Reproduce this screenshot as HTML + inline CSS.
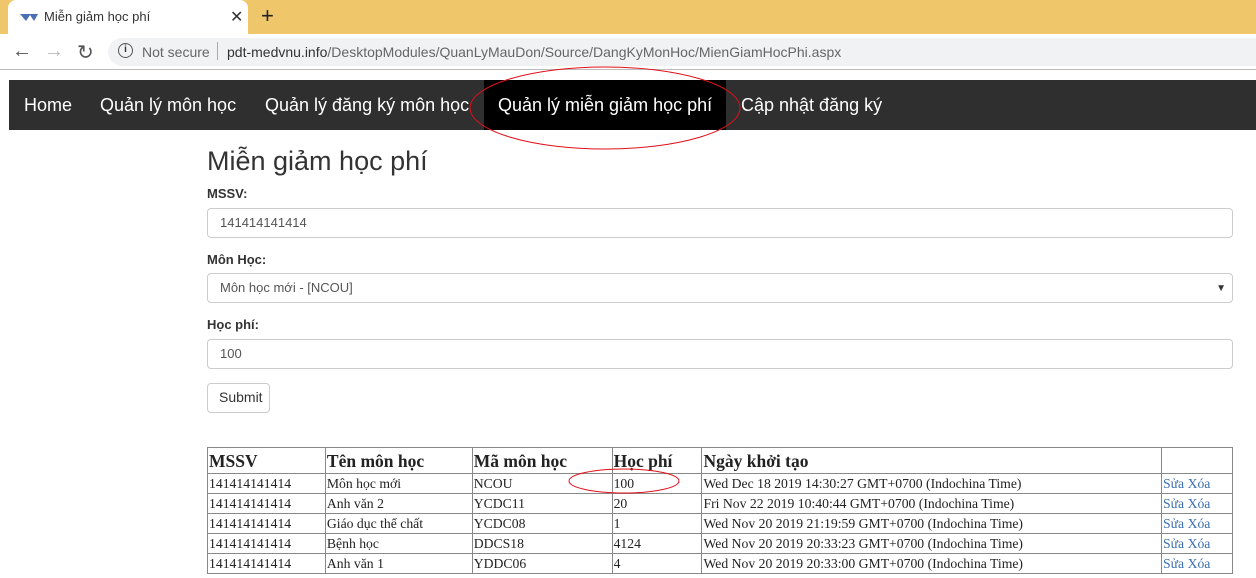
<!DOCTYPE html>
<html><head><meta charset="utf-8"><style>
*{box-sizing:border-box;margin:0;padding:0}
body{width:1256px;height:578px;overflow:hidden;background:#fff;position:relative;font-family:"Liberation Sans",Arial,sans-serif}
.abs{position:absolute}
.tabbar{left:0;top:0;width:1256px;height:34px;background:#f0c66a}
.tab{left:8px;top:0;width:240px;height:34px;background:#fff;border-radius:8px 8px 0 0;font-size:13px;color:#333}
.addr{left:0;top:34px;width:1256px;height:36px;background:#fff;border-bottom:1px solid #bbb}
.omni{left:108px;top:38px;width:1160px;height:28px;background:#f1f2f4;border-radius:14px;font-size:14px;color:#333}
.nav{left:9px;top:80px;width:1247px;height:50px;background:#2f2f2f}
.nav span{position:absolute;top:15px;color:#fff;font-size:18px}
.lbl{font-size:13px;font-weight:bold;color:#333}
.inp{left:207px;width:1026px;height:30px;border:1px solid #ccc;border-radius:4px;font-size:13px;color:#555;padding:6px 12px}
table{position:absolute;left:207px;top:447px;width:1026px;border-collapse:collapse;font-family:"Liberation Serif",serif;font-size:13.7px;color:#222}
td,th{border:1px solid #888;padding:0 1px;text-align:left;height:20px;line-height:18px;white-space:nowrap}
th{font-size:17.5px;font-weight:bold;height:26px}
a{color:#3a6fb0;text-decoration:none}
</style></head><body>
<div class="abs tabbar"></div>
<div class="abs tab">
 <svg class="abs" style="left:12px;top:12px" width="18" height="10"><path d="M0 2 L6 9 L10 3 L14 9 L18 2 Z" fill="#4a6fb5"/></svg>
 <span class="abs" style="left:36px;top:9px">Miễn giảm học phí</span>
 <span class="abs" style="left:222px;top:7px;font-size:16px">✕</span>
</div>
<span class="abs" style="left:261px;top:3px;font-size:22px;color:#222">+</span>
<div class="abs addr"></div>
<span class="abs" style="left:12px;top:40px;font-size:20px;color:#555">←</span>
<span class="abs" style="left:44px;top:40px;font-size:20px;color:#bbb">→</span>
<span class="abs" style="left:77px;top:40px;font-size:20px;color:#555">↻</span>
<div class="abs omni">
 <span class="abs" style="left:10px;top:5px;width:15px;height:15px;border:1.5px solid #555;border-radius:50%;font-size:10px;text-align:center;line-height:12px;font-weight:bold">i</span>
 <span class="abs" style="left:34px;top:6px;color:#666">Not secure</span>
 <span class="abs" style="left:109px;top:4px;width:1px;height:18px;background:#aaa"></span>
 <span class="abs" style="left:119px;top:6px">pdt-medvnu.info<span style="color:#666">/DesktopModules/QuanLyMauDon/Source/DangKyMonHoc/MienGiamHocPhi.aspx</span></span>
</div>
<div class="abs nav">
 <div class="abs" style="left:475px;top:0;width:242px;height:50px;background:#000"></div>
 <span style="left:15px">Home</span>
 <span style="left:91px">Quản lý môn học</span>
 <span style="left:256px">Quản lý đăng ký môn học</span>
 <span style="left:489px">Quản lý miễn giảm học phí</span>
 <span style="left:732px">Cập nhật đăng ký</span>
</div>
<div class="abs" style="left:207px;top:146px;font-size:27px;color:#333">Miễn giảm học phí</div>
<div class="abs lbl" style="left:207px;top:186px">MSSV:</div>
<div class="abs inp" style="top:208px">141414141414</div>
<div class="abs lbl" style="left:207px;top:252px">Môn Học:</div>
<div class="abs inp" style="top:273px;background:#fff">Môn học mới - [NCOU]<span class="abs" style="right:6px;top:9px;font-size:10px;color:#333">▼</span></div>
<div class="abs lbl" style="left:207px;top:317px">Học phí:</div>
<div class="abs inp" style="top:339px">100</div>
<div class="abs" style="left:207px;top:383px;width:63px;height:30px;border:1px solid #ccc;border-radius:4px;font-size:14px;color:#333;padding:5px 11px">Submit</div>
<table>
<colgroup><col style="width:118px"><col style="width:147px"><col style="width:140px"><col style="width:90px"><col style="width:460px"><col style="width:71px"></colgroup>
<tr><th>MSSV</th><th>Tên môn học</th><th>Mã môn học</th><th>Học phí</th><th>Ngày khởi tạo</th><th></th></tr>
<tr><td>141414141414</td><td>Môn học mới</td><td>NCOU</td><td>100</td><td>Wed Dec 18 2019 14:30:27 GMT+0700 (Indochina Time)</td><td><a>Sửa</a> <a>Xóa</a></td></tr>
<tr><td>141414141414</td><td>Anh văn 2</td><td>YCDC11</td><td>20</td><td>Fri Nov 22 2019 10:40:44 GMT+0700 (Indochina Time)</td><td><a>Sửa</a> <a>Xóa</a></td></tr>
<tr><td>141414141414</td><td>Giáo dục thể chất</td><td>YCDC08</td><td>1</td><td>Wed Nov 20 2019 21:19:59 GMT+0700 (Indochina Time)</td><td><a>Sửa</a> <a>Xóa</a></td></tr>
<tr><td>141414141414</td><td>Bệnh học</td><td>DDCS18</td><td>4124</td><td>Wed Nov 20 2019 20:33:23 GMT+0700 (Indochina Time)</td><td><a>Sửa</a> <a>Xóa</a></td></tr>
<tr><td>141414141414</td><td>Anh văn 1</td><td>YDDC06</td><td>4</td><td>Wed Nov 20 2019 20:33:00 GMT+0700 (Indochina Time)</td><td><a>Sửa</a> <a>Xóa</a></td></tr>
</table>
<svg class="abs" style="left:0;top:0" width="1256" height="578">
 <ellipse cx="605" cy="108" rx="135" ry="41" fill="none" stroke="#e0101a" stroke-width="1"/>
 <ellipse cx="624" cy="481" rx="55" ry="12" fill="none" stroke="#e0101a" stroke-width="1"/>
</svg>
</body></html>
